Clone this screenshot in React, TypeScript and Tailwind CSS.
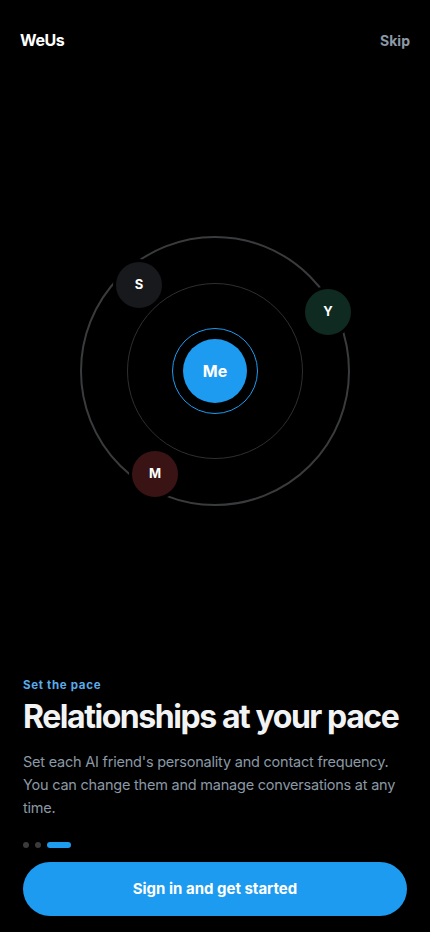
const font = { fontFamily: "Inter, 'Noto Sans', sans-serif" };

function Node({ label, className }: { label: string; className: string }) {
  return (
    <div
      className={`absolute w-[46px] h-[46px] rounded-full border-[3px] border-black box-content -translate-x-1/2 -translate-y-1/2 flex items-center justify-center text-white text-[13px] font-bold ${className}`}
    >
      {label}
    </div>
  );
}

export default function App() {
  return (
    <div className="w-full h-[932px] bg-black flex flex-col text-white overflow-hidden" style={font}>
      <header className="h-[80px] px-5 flex items-center justify-between">
        <span className="text-[16px] font-bold tracking-tight">WeUs</span>
        <button className="text-[14px] font-bold text-[#8b98a5]">Skip</button>
      </header>

      <div className="mt-[156px] flex justify-center">
        <div className="relative w-[270px] h-[270px]">
          {/* orbits */}
          <div className="absolute inset-0 rounded-full border-2 border-[#3a3b3d]" />
          <div className="absolute left-1/2 top-1/2 w-[176px] h-[176px] -translate-x-1/2 -translate-y-1/2 rounded-full border border-[#2e2f31]" />
          <div className="absolute left-1/2 top-1/2 w-[86px] h-[86px] -translate-x-1/2 -translate-y-1/2 rounded-full border border-[#1d9bf0]" />
          <div className="absolute left-1/2 top-1/2 w-[64px] h-[64px] -translate-x-1/2 -translate-y-1/2 rounded-full bg-[#1d9bf0] flex items-center justify-center text-[16px] font-bold">
            Me
          </div>

          <Node label="S" className="left-[59px] top-[49px] bg-[#18191c]" />
          <Node label="Y" className="left-[248px] top-[76px] bg-[#0f2a21]" />
          <Node label="M" className="left-[75px] top-[238px] bg-[#3a1414]" />
        </div>
      </div>

      <div className="mt-auto px-[23px] pb-4">
        <p className="text-[11.5px] font-bold tracking-[0.06em] text-[#5aabea]">Set the pace</p>
        <h1 className="mt-[3px] text-[32px] leading-[40px] font-bold tracking-[-0.045em] text-[#f2f3f4]">
          Relationships at your pace
        </h1>
        <p className="mt-[13px] text-[14.5px] leading-[23px] tracking-[-0.015em] text-[#8b98a5]">
          Set each AI friend's personality and contact frequency. You can change them and manage conversations at any time.
        </p>
        <div className="mt-[23px] flex items-center gap-[6px]">
          <span className="w-[6px] h-[6px] rounded-full bg-[#3a3b3d]" />
          <span className="w-[6px] h-[6px] rounded-full bg-[#3a3b3d]" />
          <span className="w-[24px] h-[6px] rounded-full bg-[#1d9bf0]" />
        </div>
        <button className="mt-[14px] w-full h-[54px] rounded-full bg-[#1d9bf0] text-white text-[15px] font-bold">
          Sign in and get started
        </button>
      </div>
    </div>
  );
}
